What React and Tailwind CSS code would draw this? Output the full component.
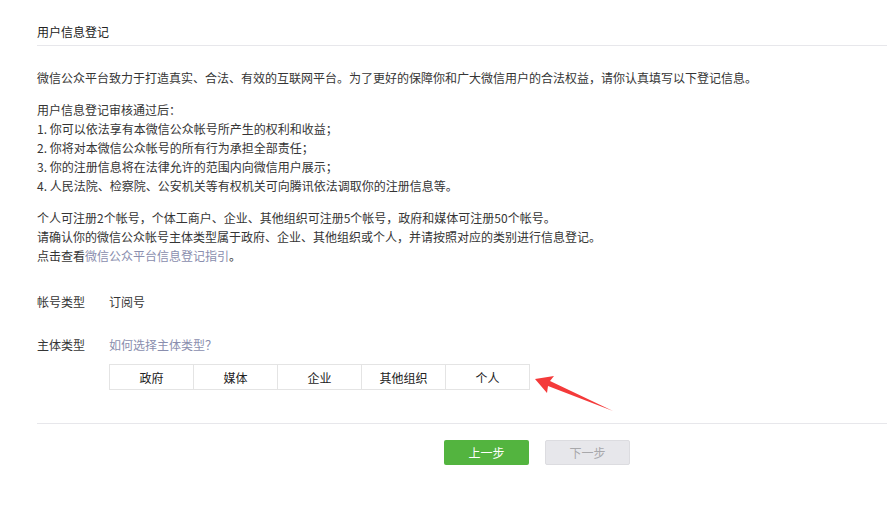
import React from "react";

export default function App() {
  const types = ["政府", "媒体", "企业", "其他组织", "个人"];
  return (
    <div
      className="relative w-screen min-h-[514px] overflow-hidden bg-white text-[12px] leading-[19px] text-[#353535]"
      style={{ fontFamily: '"Noto Sans CJK SC", "Noto Sans", sans-serif' }}
    >
      <div className="ml-[37px] w-[1000px]">
        <div className="border-b border-[#e7e7eb] pt-[22px] pb-[4px] text-[#222]">用户信息登记</div>

        <p className="mt-[22px]">
          微信公众平台致力于打造真实、合法、有效的互联网平台。为了更好的保障你和广大微信用户的合法权益，请你认真填写以下登记信息。
        </p>
        <div className="mt-[13px]">
          <p>用户信息登记审核通过后：</p>
          <p>1. 你可以依法享有本微信公众帐号所产生的权利和收益；</p>
          <p>2. 你将对本微信公众帐号的所有行为承担全部责任；</p>
          <p>3. 你的注册信息将在法律允许的范围内向微信用户展示；</p>
          <p>4. 人民法院、检察院、公安机关等有权机关可向腾讯依法调取你的注册信息等。</p>
        </div>
        <div className="mt-[13px]">
          <p>个人可注册2个帐号，个体工商户、企业、其他组织可注册5个帐号，政府和媒体可注册50个帐号。</p>
          <p>请确认你的微信公众帐号主体类型属于政府、企业、其他组织或个人，并请按照对应的类别进行信息登记。</p>
          <p>
            点击查看<span className="text-[#8a8eae]">微信公众平台信息登记指引</span>。
          </p>
        </div>

        <div className="mt-[27px] flex">
          <div className="w-[72px]">帐号类型</div>
          <div>订阅号</div>
        </div>

        <div className="mt-[24px] flex">
          <div className="w-[72px]">主体类型</div>
          <div>
            <div className="text-[#8a8eae]">如何选择主体类型？</div>
            <div className="mt-[10px] flex w-[421px] border border-[#e4e4e4] divide-x divide-[#e4e4e4]">
              {types.map((t) => (
                <div key={t} className="flex h-[24px] flex-1 items-center justify-center text-[#222]">
                  {t}
                </div>
              ))}
            </div>
          </div>
        </div>

        <div className="mt-[33px] border-t border-[#e7e7eb] pt-[16px] flex justify-center gap-[16px]">
          <button className="h-[25px] w-[85px] rounded-[2px] bg-[#53b43f] text-white">上一步</button>
          <button className="h-[25px] w-[85px] rounded-[2px] border border-[#dcdce0] bg-[#e7e7eb] text-[#a8a8ab]">
            下一步
          </button>
        </div>
      </div>

      <svg className="absolute left-0 top-0" width="887" height="514" viewBox="0 0 887 514">
        <polygon
          points="535,379 554,376 550,381 613,411 548,386 547,393"
          fill="#f43a3a"
        />
      </svg>
    </div>
  );
}
